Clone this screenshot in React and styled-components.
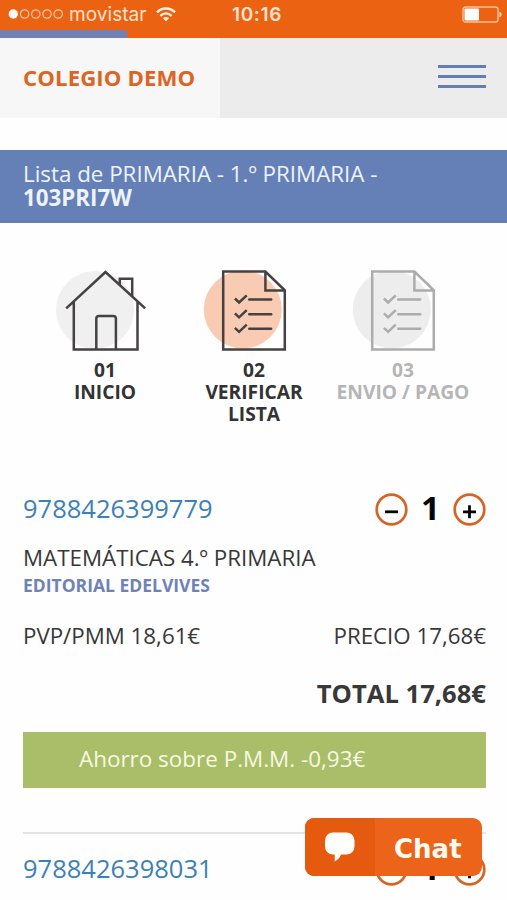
import React from "react";
import styled, { createGlobalStyle } from "styled-components";

const GlobalStyle = createGlobalStyle`
  * { box-sizing: border-box; }
  body {
    margin: 0;
    background: #fefefe;
    font-family: "Open Sans", "Noto Sans", sans-serif;
    color: #383838;
    overflow: hidden;
  }
`;

const Screen = styled.main`
  position: relative;
  width: 507px;
  height: 900px;
  overflow: hidden;
`;

const StatusBar = styled.div`
  display: grid;
  grid-template-columns: 1fr 60px 1fr;
  align-items: center;
  height: 30px;
  padding: 0 5px 0 8px;
  background: #ec6213;
  color: #fde3cf;
`;

const Carrier = styled.div`
  display: flex;
  align-items: center;
`;

const CarrierName = styled.span`
  margin: 0 9px 0 5px;
  font: 400 19px/30px Inter, sans-serif;
  letter-spacing: 0.05px;
`;

const Clock = styled.span`
  padding-left: 4px;
  font: 600 19px/28px Inter, sans-serif;
  text-align: center;
  letter-spacing: 0.6px;
  white-space: nowrap;
`;

const BatterySlot = styled.div`
  display: flex;
  justify-content: flex-end;
  margin-top: -2px;
`;

const ProgressTrack = styled.div`
  height: 8px;
  background: #ec6213;
`;

const ProgressFill = styled.div`
  width: 127px;
  height: 8px;
  background: #7180b5;
`;

const Header = styled.header`
  display: flex;
  height: 80px;
  background: #edecec;
`;

const SchoolName = styled.div`
  width: 220px;
  padding-left: 23px;
  background: #f7f7f7;
  color: #dc6425;
  font-size: 22.2px;
  font-weight: 700;
  line-height: 79px;
  letter-spacing: 0.1px;
  white-space: nowrap;
`;

const MenuButton = styled.button`
  display: flex;
  flex-direction: column;
  justify-content: space-between;
  width: 48px;
  height: 23px;
  margin: 27px 21px 0 auto;
  padding: 0;
  border: 0;
  background: none;
`;

const MenuLine = styled.span`
  height: 3px;
  background: #657db3;
`;

const ListBanner = styled.section`
  height: 73px;
  margin-top: 32px;
  padding: 12px 23px;
  background: #6580b6;
  color: #edf3ff;
  font-size: 22.35px;
  line-height: 24px;
  white-space: nowrap;
`;

const Steps = styled.nav`
  display: grid;
  grid-template-columns: repeat(3, 149px);
  height: 251px;
  padding: 47px 0 0 30.5px;
`;

const Step = styled.div`
  display: flex;
  flex-direction: column;
  align-items: center;
  color: ${(p) => (p.$disabled ? "#b5b5b5" : "#333333")};
  font-size: 19.2px;
  font-weight: 700;
  line-height: 22px;
  text-align: center;

  svg {
    display: block;
    margin-bottom: 5px;
    overflow: visible;
  }
`;

const Item = styled.article`
  display: flex;
  flex-direction: column;
  margin: 0 21px 0 23px;
`;

const ItemTop = styled.div`
  display: flex;
  justify-content: space-between;
  align-items: center;
  height: 69px;
  padding-top: 2px;
`;

const Isbn = styled.a`
  padding-bottom: 3px;
  color: #3d80b5;
  font-size: 25.5px;
  line-height: 36px;
`;

const Quantity = styled.div`
  display: flex;
  align-items: center;
  width: 111px;
  justify-content: space-between;
  color: #050505;
`;

const Count = styled.span`
  padding-bottom: 5px;
  font-size: 33px;
  line-height: 33px;
  font-weight: 700;
`;

const RoundButton = styled.button`
  display: block;
  width: 33px;
  height: 33px;
  padding: 0;
  border: 0;
  background: none;

  svg { display: block; }
`;

const Title = styled.h2`
  margin: 0;
  font-size: 22.35px;
  font-weight: 400;
  line-height: 30px;
  white-space: nowrap;
`;

const Publisher = styled.div`
  color: #6f82b8;
  font-size: 17.5px;
  font-weight: 700;
  line-height: 25px;
`;

const Prices = styled.div`
  display: flex;
  justify-content: space-between;
  margin-top: 23px;
  font-size: 22.3px;
  line-height: 30px;
`;

const Total = styled.div`
  margin-top: 26px;
  font-size: 25.6px;
  font-weight: 700;
  line-height: 34px;
  text-align: right;
`;

const Savings = styled.div`
  height: 56px;
  margin-top: 21px;
  padding-left: 56px;
  background: #aabd69;
  color: #f6fae0;
  font-size: 22.45px;
  line-height: 54px;
`;

const Divider = styled.hr`
  width: 463px;
  height: 2px;
  margin: 44px 0 0 23px;
  border: 0;
  background: #e4e4e4;
`;

const ChatButton = styled.button`
  position: absolute;
  top: 818px;
  left: 305px;
  display: flex;
  width: 177px;
  height: 58px;
  padding: 0;
  overflow: hidden;
  border: 0;
  border-radius: 9px;
  background: #eb6419;
  color: #fffaf0;
`;

const ChatIcon = styled.span`
  display: flex;
  width: 70px;
  height: 58px;
  background: #e65a10;
`;

const ChatLabel = styled.span`
  flex: 1;
  padding-left: 19px;
  font: 700 26px/63px "DejaVu Sans", sans-serif;
  text-align: left;
`;

function SignalDots() {
  return (
    <svg width="56" height="12" viewBox="0 0 56 12" fill="none" stroke="#fbc49d" strokeWidth="1.2">
      <circle cx="5.3" cy="5" r="4.7" fill="#fffaf3" stroke="none" />
      {[16.6, 27.8, 39, 50.2].map((x) => (
        <circle key={x} cx={x} cy="5" r="4.2" />
      ))}
    </svg>
  );
}

function WifiIcon() {
  return (
    <svg width="20" height="17" viewBox="0 0 20 17" fill="none" stroke="#fff0dd" strokeWidth="2.4">
      <path d="M1 5.3C6.2.3 13.8.3 19 5.3" />
      <path d="M4.3 8.8c3.4-3.1 8-3.1 11.4 0" />
      <path d="M6.9 11.1c1.9-1.5 4.3-1.5 6.2 0L10 14.4Z" fill="#fff0dd" stroke="none" />
    </svg>
  );
}

function BatteryIcon() {
  return (
    <svg width="40" height="17" viewBox="0 0 40 17">
      <rect x="1" y="1" width="35" height="15" rx="2.5" fill="none" stroke="#fbc39b" strokeWidth="1.4" />
      <rect x="2.5" y="2.5" width="14.5" height="12" rx="1" fill="#fff" />
      <path d="M37.5 5.5c2.7.8 2.7 5.2 0 6Z" fill="#fddcc2" />
    </svg>
  );
}

function HouseIcon() {
  return (
    <svg width="98" height="84" viewBox="0 0 98 84" fill="none" stroke="#454241" strokeWidth="2.5">
      <circle cx="39" cy="40" r="39" fill="#f0f0f1" stroke="none" />
      <path d="M10.2 38.4 49.5 2l39.7 36.4M17.8 32v47.5h63.7V32M63.8 14.5V8.8h12.4v17.2" />
      <path d="M40.3 79.5V48.7q0-2.7 2.7-2.7h14.2q2.7 0 2.7 2.7v30.8" />
    </svg>
  );
}

function ChecklistIcon({ stroke, fill }) {
  return (
    <svg width="98" height="84" viewBox="0 0 98 84" fill="none" stroke={stroke} strokeWidth="2.5">
      <circle cx="37.8" cy="39.5" r="39" fill={fill} stroke="none" />
      <path d="M18.2 1.6h42.2l19.4 18.8v59.1H18.2ZM60.4 1.6v18.8h19.4" />
      {[29.5, 44.3, 58.8].map((y) => (
        <g key={y}>
          <path d={`M29.9 ${y - 1}l4.2 4 7.6-7.2`} strokeWidth="2.5" />
          <path d={`M44.2 ${y}h22`} strokeWidth="2.4" strokeLinecap="round" />
        </g>
      ))}
    </svg>
  );
}

function StepperButton({ plus, label }) {
  return (
    <RoundButton aria-label={label}>
      <svg width="33" height="33" viewBox="0 0 33 33" fill="none">
        <circle cx="16.5" cy="16.5" r="14.8" stroke="#d76324" strokeWidth="2.7" />
        <path d={plus ? "M10 18.8h13M16.5 12.3v13" : "M10 18.8h13"} stroke="#050505" strokeWidth="2.8" />
      </svg>
    </RoundButton>
  );
}

function ItemHeader({ isbn }) {
  return (
    <ItemTop>
      <Isbn>{isbn}</Isbn>
      <Quantity>
        <StepperButton label="Restar" />
        <Count>1</Count>
        <StepperButton plus label="Sumar" />
      </Quantity>
    </ItemTop>
  );
}

export default function App() {
  return (
    <Screen>
      <GlobalStyle />
      <StatusBar>
        <Carrier>
          <SignalDots />
          <CarrierName>movistar</CarrierName>
          <WifiIcon />
        </Carrier>
        <Clock>10:16</Clock>
        <BatterySlot><BatteryIcon /></BatterySlot>
      </StatusBar>
      <ProgressTrack><ProgressFill /></ProgressTrack>
      <Header>
        <SchoolName>COLEGIO DEMO</SchoolName>
        <MenuButton aria-label="Menú">
          <MenuLine /><MenuLine /><MenuLine />
        </MenuButton>
      </Header>
      <ListBanner>
        Lista de PRIMARIA - 1.º PRIMARIA -<br />
        <strong>103PRI7W</strong>
      </ListBanner>
      <Steps>
        <Step><HouseIcon />01<br />INICIO</Step>
        <Step><ChecklistIcon stroke="#454241" fill="#facbb3" />02<br />VERIFICAR<br />LISTA</Step>
        <Step $disabled><ChecklistIcon stroke="#acacac" fill="#ededed" />03<br />ENVIO / PAGO</Step>
      </Steps>
      <Item>
        <ItemHeader isbn="9788426399779" />
        <Title>MATEMÁTICAS 4.º PRIMARIA</Title>
        <Publisher>EDITORIAL EDELVIVES</Publisher>
        <Prices>
          <span>PVP/PMM 18,61€</span>
          <span>PRECIO 17,68€</span>
        </Prices>
        <Total>TOTAL 17,68€</Total>
        <Savings>Ahorro sobre P.M.M. -0,93€</Savings>
      </Item>
      <Divider />
      <Item>
        <ItemHeader isbn="9788426398031" />
      </Item>
      <ChatButton>
        <ChatIcon>
          <svg width="70" height="58" viewBox="0 0 70 58" fill="#fffefa">
            <path d="M28 14.5h13.5a8 8 0 0 1 8 8v6a8 8 0 0 1-8 8H36q-1.5 4.3-6.3 7V36.5H28a8 8 0 0 1-8-8v-6a8 8 0 0 1 8-8Z" />
          </svg>
        </ChatIcon>
        <ChatLabel>Chat</ChatLabel>
      </ChatButton>
    </Screen>
  );
}
